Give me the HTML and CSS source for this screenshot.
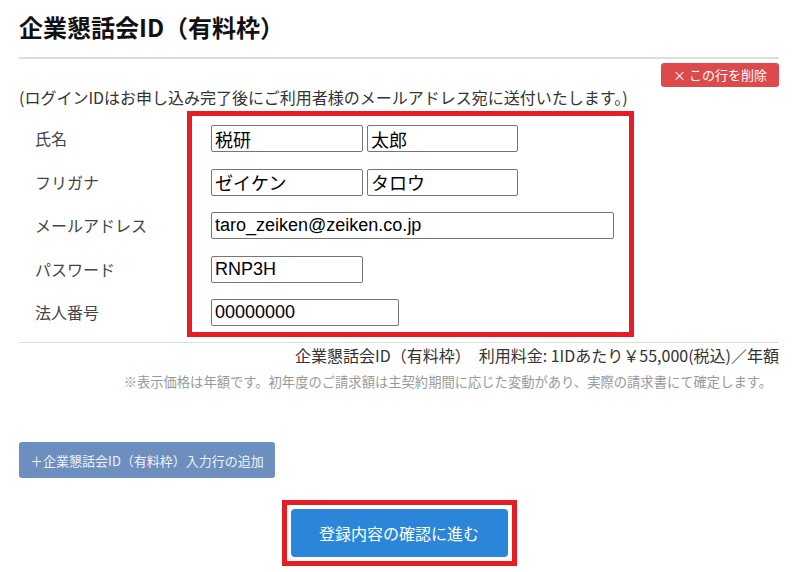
FILE: index.html
```html
<!DOCTYPE html>
<html lang="ja">
<head>
    <meta charset="UTF-8">
    <meta name="viewport" content="width=device-width, initial-scale=1.0">
    <title>企業懇話会ID（有料枠）</title>
    <link rel="stylesheet" href="styles.css">
</head>
<body>
    <div class="page">
        <h1 class="title">企業懇話会ID（有料枠）</h1>
        <div class="title-rule"></div>

        <div class="delete-row">
            <button class="btn-delete">× この行を削除</button>
        </div>
        <p class="login-note">(ログインIDはお申し込み完了後にご利用者様のメールアドレス宛に送付いたします。)</p>

        <div class="form-grid">
            <div class="mark-frame"></div>

            <label class="field-label">氏名</label>
            <div class="field-inputs">
                <input class="inp inp-half" type="text" value="税研">
                <input class="inp inp-half2" type="text" value="太郎">
            </div>

            <label class="field-label">フリガナ</label>
            <div class="field-inputs">
                <input class="inp inp-half" type="text" value="ゼイケン">
                <input class="inp inp-half2" type="text" value="タロウ">
            </div>

            <label class="field-label">メールアドレス</label>
            <div class="field-inputs">
                <input class="inp inp-mail" type="text" value="taro_zeiken@zeiken.co.jp">
            </div>

            <label class="field-label">パスワード</label>
            <div class="field-inputs">
                <input class="inp inp-half" type="text" value="RNP3H">
            </div>

            <label class="field-label">法人番号</label>
            <div class="field-inputs">
                <input class="inp inp-corp" type="text" value="00000000">
            </div>
        </div>

        <div class="price-rule"></div>
        <p class="price-line">企業懇話会ID（有料枠）　利用料金: 1IDあたり￥55,000(税込)／年額</p>
        <p class="price-note">※表示価格は年額です。初年度のご請求額は主契約期間に応じた変動があり、実際の請求書にて確定します。</p>

        <button class="btn-add">＋企業懇話会ID（有料枠）入力行の追加</button>

        <div class="submit-row">
            <div class="submit-frame">
                <button class="btn-submit">登録内容の確認に進む</button>
            </div>
        </div>
    </div>
</body>
</html>
```

FILE: styles.css
```css
body {
    margin: 0;
    background-color: #fff;
    font-family: "Noto Sans CJK JP", "Noto Sans", sans-serif;
    color: #333;
}
.page {
    width: 760px;
    padding-left: 19px;
}
.title {
    margin: 0;
    padding-top: 10px;
    font-size: 24px;
    line-height: 33px;
    font-weight: bold;
    color: #111;
}
.title-rule {
    margin-top: 14px;
    border-top: 2px solid #ddd;
}
.delete-row {
    display: flex;
    justify-content: flex-end;
    margin-top: 4px;
}
.btn-delete {
    width: 118px;
    height: 24px;
    padding: 0;
    border: none;
    border-radius: 3px;
    background-color: #dc4a4c;
    color: #fff;
    font-family: inherit;
    font-size: 13px;
    line-height: 24px;
}
.login-note {
    margin: 0;
    font-size: 16px;
    line-height: 20px;
    color: #333;
}
.form-grid {
    position: relative;
    display: grid;
    grid-template-columns: 192px 1fr;
    row-gap: 16.5px;
    margin-top: 18px;
}
.mark-frame {
    position: absolute;
    left: 168px;
    top: -14px;
    width: 447px;
    height: 226px;
    box-sizing: border-box;
    border: 5px solid #e51e26;
    pointer-events: none;
}
.field-label {
    padding-left: 16px;
    font-size: 16px;
    line-height: 27px;
    color: #444;
}
.field-inputs {
    display: flex;
    gap: 4px;
}
.inp {
    box-sizing: border-box;
    height: 27px;
    margin: 0;
    padding: 0 3px;
    border: 1px solid #767676;
    border-radius: 2px;
    font-family: "Liberation Sans", "Noto Sans CJK JP", sans-serif;
    font-size: 18px;
    color: #000;
}
.inp-half {
    width: 152px;
}
.inp-half2 {
    width: 151px;
}
.inp-mail {
    width: 403px;
}
.inp-corp {
    width: 188px;
}
.price-rule {
    margin-top: 16px;
    border-top: 1px solid #ddd;
}
.price-line {
    margin: 0;
    text-align: right;
    font-size: 16px;
    line-height: 24px;
    color: #333;
}
.price-note {
    margin: 5px 0 0;
    padding-right: 7px;
    text-align: right;
    font-size: 13.3px;
    line-height: 20px;
    color: #999;
}
.btn-add {
    display: block;
    width: 256px;
    height: 36px;
    margin-top: 50px;
    padding: 0;
    border: none;
    border-radius: 3px;
    background-color: #6c8fbf;
    color: rgba(255, 255, 255, 0.92);
    font-family: inherit;
    font-size: 13px;
}
.submit-row {
    display: flex;
    justify-content: center;
    margin-top: 22px;
}
.submit-frame {
    padding: 4px;
    border: 5px solid #e51e26;
}
.btn-submit {
    display: block;
    width: 217px;
    height: 48px;
    padding: 0;
    border: none;
    border-radius: 4px;
    background-color: #2b86d9;
    color: #fff;
    font-family: inherit;
    font-size: 16px;
}
```
